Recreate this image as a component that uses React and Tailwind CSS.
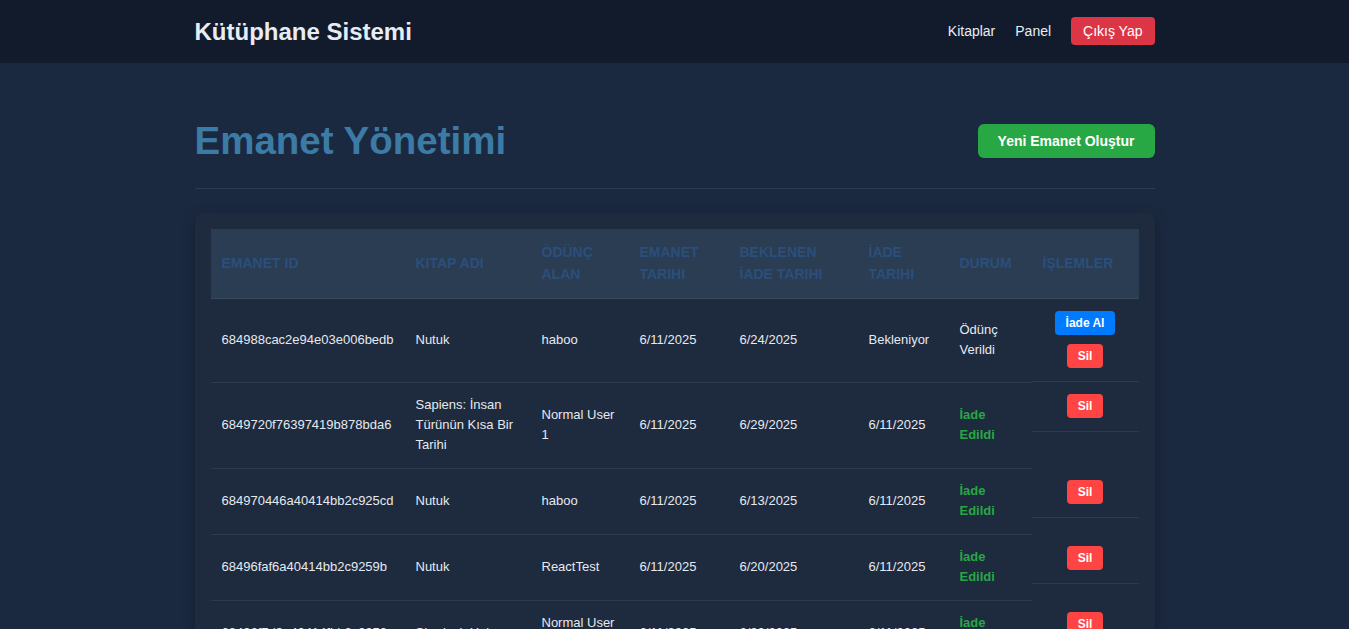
const loans = [
  { id: '684988cac2e94e03e006bedb', book: 'Nutuk', user: 'haboo', start: '6/11/2025', due: '6/24/2025', returned: null },
  { id: '6849720f76397419b878bda6', book: 'Sapiens: İnsan Türünün Kısa Bir Tarihi', user: 'Normal User 1', start: '6/11/2025', due: '6/29/2025', returned: '6/11/2025' },
  { id: '684970446a40414bb2c925cd', book: 'Nutuk', user: 'haboo', start: '6/11/2025', due: '6/13/2025', returned: '6/11/2025' },
  { id: '68496faf6a40414bb2c9259b', book: 'Nutuk', user: 'ReactTest', start: '6/11/2025', due: '6/20/2025', returned: '6/11/2025' },
  { id: '68496f7d9a40414fbb2c9250', book: 'Sherlock Holmes', user: 'Normal User 1', start: '6/11/2025', due: '6/20/2025', returned: '6/11/2025' },
  { id: '68496f2a9a40414fbb2c9241', book: 'Nutuk', user: 'haboo', start: '6/11/2025', due: '6/18/2025', returned: '6/11/2025' },
];

const headers = ['Emanet ID', 'Kitap Adı', 'Ödünç Alan', 'Emanet Tarihi', 'Beklenen İade Tarihi', 'İade Tarihi', 'Durum', 'İşlemler'];
const widths = ['w-[194px]', 'w-[126px]', 'w-[98px]', 'w-[100px]', 'w-[129px]', 'w-[91px]', 'w-[83px]', 'w-[107px]'];

const cell = 'px-[11px] py-[12.5px] leading-5 border-b border-[#2c3a4d] align-middle';

function Navbar() {
  return (
    <nav className="bg-[#111b2b] h-[63px]">
      <div className="w-[960px] mx-auto h-full flex items-center justify-between">
        <span className="text-2xl font-bold text-[#e8edf5]">Kütüphane Sistemi</span>
        <div className="flex items-center gap-5 text-sm text-[#e8edf5] -mt-[2px]">
          <a>Kitaplar</a>
          <a>Panel</a>
          <button className="bg-[#dc3545] text-white rounded px-3 py-1 leading-5">Çıkış Yap</button>
        </div>
      </div>
    </nav>
  );
}

export default function App() {
  return (
    <div className="min-h-screen bg-[#1b2940] font-['Liberation_Sans',Arial,sans-serif]">
      <Navbar />
      <main className="w-[960px] mx-auto pt-[55px] pb-10">
        <div className="flex items-center justify-between pb-6 border-b border-[#2d3b50]">
          <h1 className="text-[38.5px] leading-[46px] font-bold text-[#3c7ba5]">Emanet Yönetimi</h1>
          <button className="bg-[#28a745] text-white font-bold text-sm leading-5 px-5 py-[7px] rounded-md">
            Yeni Emanet Oluştur
          </button>
        </div>

        <div className="mt-6 bg-[#1e2a3d] rounded-lg p-4 shadow-[0_4px_14px_rgba(0,0,0,0.3)]">
          <table className="w-full table-fixed border-collapse text-[13px]">
            <colgroup>
              {widths.map((w, i) => (
                <col key={i} className={w} />
              ))}
            </colgroup>
            <thead>
              <tr className="bg-[#2a3d52] border-b border-[#3a4a5e]">
                {headers.map((h) => (
                  <th key={h} className="text-left uppercase font-bold text-sm text-[#2b4f7c] px-[11px] pt-3 pb-[13px] leading-[22px] align-middle">
                    {h}
                  </th>
                ))}
              </tr>
            </thead>
            <tbody>
              {loans.map((l) => (
                <tr key={l.id} className="text-[#e5e9f0]">
                  <td className={cell}>{l.id}</td>
                  <td className={cell}>{l.book}</td>
                  <td className={cell}>{l.user}</td>
                  <td className={cell}>{l.start}</td>
                  <td className={cell}>{l.due}</td>
                  <td className={cell}>{l.returned ?? 'Bekleniyor'}</td>
                  <td className={cell}>
                    {l.returned ? <span className="text-[#28a745] font-semibold">İade Edildi</span> : 'Ödünç Verildi'}
                  </td>
                  <td className="p-0 align-top">
                    <div className="flex flex-col items-center gap-[9px] pt-3 pb-[13px] border-b border-[#2c3a4d]">
                      {!l.returned && (
                        <button className="bg-[#007bff] text-white font-bold text-xs leading-6 px-[11px] rounded">İade Al</button>
                      )}
                      <button className="bg-[#ff4444] text-white font-bold text-xs leading-6 px-[11px] rounded">Sil</button>
                    </div>
                  </td>
                </tr>
              ))}
            </tbody>
          </table>
        </div>
      </main>
    </div>
  );
}
